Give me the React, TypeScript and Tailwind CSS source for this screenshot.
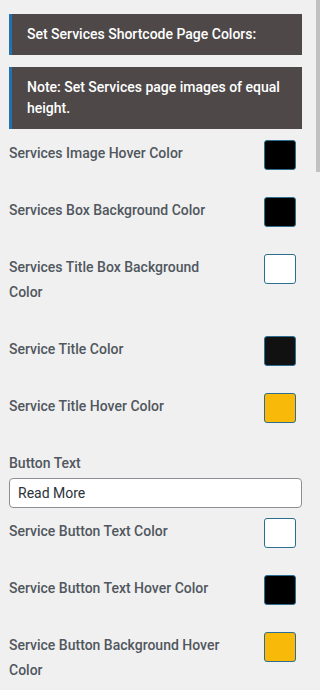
type Row = { label: string; color: string }

const topRows: Row[] = [
  { label: 'Services Image Hover Color', color: 'bg-[#000000]' },
  { label: 'Services Box Background Color', color: 'bg-[#000000]' },
  { label: 'Services Title Box Background Color', color: 'bg-white' },
  { label: 'Service Title Color', color: 'bg-[#111111]' },
  { label: 'Service Title Hover Color', color: 'bg-[#f8b908]' },
]

const bottomRows: Row[] = [
  { label: 'Service Button Text Color', color: 'bg-white' },
  { label: 'Service Button Text Hover Color', color: 'bg-[#000000]' },
  { label: 'Service Button Background Hover Color', color: 'bg-[#f8b908]' },
]

function ColorRow({ label, color }: Row) {
  return (
    <div className="flex items-start justify-between">
      <span className="w-[226px] pt-[1px] pb-[31px] leading-[25px] text-[14px] font-medium text-[#50575e]">{label}</span>
      <div className={`w-[32px] h-[30px] mr-[6px] rounded-[3px] border border-[#2c6d94] ${color}`}></div>
    </div>
  )
}

function Notice({ children }: { children: React.ReactNode }) {
  return (
    <div className="bg-[#4e4948] border-l-[3px] border-[#2271b1] pl-[15px] pr-3 py-[10px] text-white text-[14px] font-medium leading-[21px]">
      {children}
    </div>
  )
}

export default function App() {
  return (
    <div className="w-[320px] h-[690px] flex overflow-hidden bg-[#f0f0f0] font-['Roboto',sans-serif]">
      <div className="flex-1 pl-[9px] pr-[14px] pt-[14px]">
        {/* headings */}
        <div className="flex flex-col gap-3">
          <Notice>Set Services Shortcode Page Colors:</Notice>
          <Notice>Note: Set Services page images of equal height.</Notice>
        </div>

        <div className="mt-[11px]">
          {topRows.map((r) => (
            <ColorRow key={r.label} {...r} />
          ))}

          {/* button text */}
          <div className="pt-[1px] text-[14px] font-medium leading-[25px] text-[#50575e]">Button Text</div>
          <div className="mt-[2px] mb-[10px] h-[30px] flex items-center px-2 bg-white border border-[#8c8f94] rounded-[4px] text-[14px] text-[#2c3338]">
            Read More
          </div>

          {bottomRows.map((r) => (
            <ColorRow key={r.label} {...r} />
          ))}
        </div>
      </div>

      {/* scrollbar */}
      <div className="w-[4px]">
        <div className="h-[172px] bg-[#c1c1c1]"></div>
      </div>
    </div>
  )
}
